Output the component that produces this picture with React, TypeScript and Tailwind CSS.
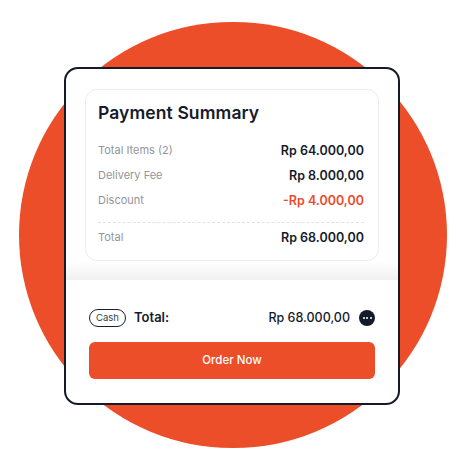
import React from "react";

const font = { fontFamily: "Inter, 'Noto Sans', sans-serif" };

function Row({ label, value, red }: { label: string; value: string; red?: boolean }) {
  return (
    <div className="flex h-[25px] items-center justify-between">
      <span className="text-[11px] leading-none text-[#92959c] -mt-[3px]">{label}</span>
      <span className={`text-[12.5px] font-semibold leading-none ${red ? "text-[#ec4a2a]" : "text-[#161b2c]"}`}>{value}</span>
    </div>
  );
}

export default function App() {
  return (
    <div className="relative w-[465px] h-[461px] bg-white overflow-hidden" style={font}>
      <div className="absolute left-[19px] top-[22px] w-[428px] h-[426px] rounded-full bg-[#ec4e2a]" />
      <div className="relative pl-[64px] pt-[67px]">
        <div className="w-[336px] h-[338px] rounded-[14px] border-[2.5px] border-[#151a2b] bg-white overflow-hidden flex flex-col">
          <div className="px-[19px] pt-[20px]">
            <div className="rounded-[12px] border border-[#ececec] pl-[12px] pr-[14px] pt-[11px] pb-[9px]">
              <div className="text-[17.5px] font-semibold leading-[24px] text-[#161b2c] tracking-[0.1px]">Payment Summary</div>
              <div className="mt-[14px]">
                <Row label="Total Items (2)" value="Rp 64.000,00" />
                <Row label="Delivery Fee" value="Rp 8.000,00" />
                <Row label="Discount" value="-Rp 4.000,00" red />
              </div>
              <div className="mt-[8px] border-t border-dashed border-[#e2e2e2]" />
              <div className="mt-[3px]">
                <Row label="Total" value="Rp 68.000,00" />
              </div>
            </div>
          </div>
          <div className="h-[19px] bg-gradient-to-b from-white to-[#f1f1f1]" />
          <div className="flex-1 px-[23px] pt-[29px]">
            <div className="flex h-[18px] items-center">
              <div className="flex h-[18px] w-[37px] items-center justify-center rounded-full border-[1.3px] border-[#1b2030] text-[9.5px] text-[#3a3d45]">
                Cash
              </div>
              <span className="ml-[8px] text-[13px] font-semibold text-[#161b2c]">Total:</span>
              <span className="ml-auto text-[12.5px] font-medium text-[#161b2c]">Rp 68.000,00</span>
              <div className="ml-[9px] flex h-[16px] w-[16px] items-center justify-center gap-[1.5px] rounded-full bg-[#151a2b]">
                <span className="h-[2px] w-[2px] rounded-full bg-white" />
                <span className="h-[2px] w-[2px] rounded-full bg-white" />
                <span className="h-[2px] w-[2px] rounded-full bg-white" />
              </div>
            </div>
            <button className="mt-[15px] flex h-[37px] w-full items-center justify-center rounded-[6px] bg-[#ec4e2a] text-[11.5px] font-medium text-white">
              Order Now
            </button>
          </div>
        </div>
      </div>
    </div>
  );
}
